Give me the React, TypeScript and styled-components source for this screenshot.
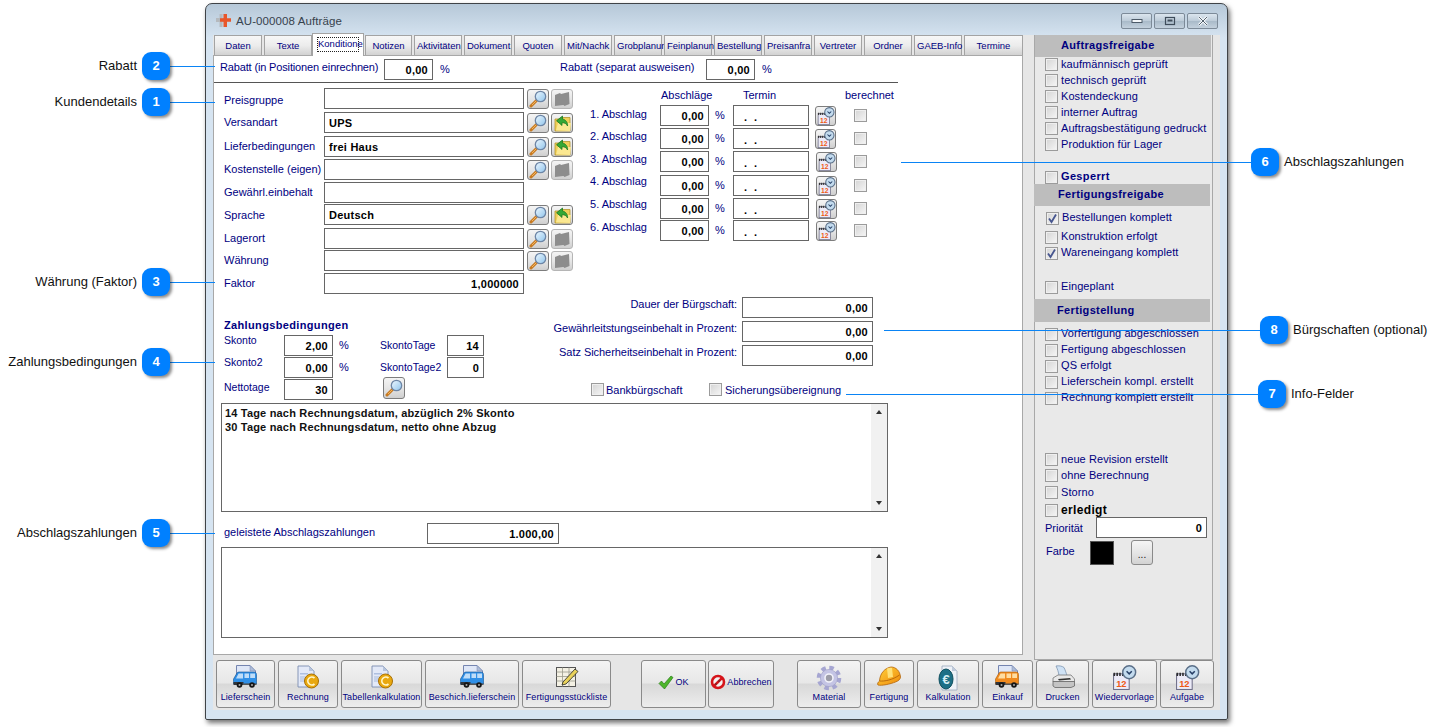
import React from "react";
import styled, { createGlobalStyle } from "styled-components";

const Global = createGlobalStyle`
  html, body { margin: 0; padding: 0; width: 1442px; height: 727px; overflow: hidden; background: #fff; }
  body { font-family: "Liberation Sans", Arial, sans-serif; }
  * { box-sizing: border-box; }
`;

const NAVY = "#00007f";

const Page = styled.div`position: relative; width: 1442px; height: 727px; padding: 3px 0 0 205px;`;
const Win = styled.div`
  width: 1023px; height: 717px; border: 1px solid #3f4347; border-radius: 7px 7px 2px 2px;
  background: linear-gradient(#b6c8d8 0, #d6e4f1 34px); padding: 0 7px;
  box-shadow: 2px 3px 5px rgba(0,0,0,.55);
`;
const TitleBar = styled.div`height: 31px; padding: 3px 2px 0 3px; display: flex; align-items: center;`;
const TitleText = styled.div`font-size: 11.5px; color: #37424d; margin-left: 5px; flex: 1; letter-spacing: .1px;`;
const Controls = styled.div`display: flex; gap: 2px;`;
const WinBtn = styled.div`
  width: 31px; height: 16px; border: 1px solid #7c8a98; border-radius: 2px;
  background: linear-gradient(#dbe5ee, #bccbd8 50%, #a9bac9 52%, #c3d1dd);
  display: flex; align-items: center; justify-content: center;
`;
const Client = styled.div`height: 675px; background: #e6e6e6;`;
const TopRow = styled.div`display: flex; height: 625px;`;
const MainCol = styled.div`width: 810px; display: flex; flex-direction: column;`;
const TabStrip = styled.div`height: 20px; display: flex; gap: 2px; padding-left: 1px; align-items: flex-end; position: relative; z-index: 1;`;
const Tab = styled.div<{ $w: number; $fit?: boolean }>`
  width: ${p => p.$w}px; height: 20px; flex: none; border: 1px solid #a3a3a3; border-bottom: 0;
  background: linear-gradient(#f7f7f7, #ececec 50%, #d2d2d2);
  color: ${NAVY}; font-size: 9.5px; line-height: 19px; white-space: nowrap;
  text-align: ${p => p.$fit ? "left" : "center"}; padding-left: ${p => p.$fit ? 2 : 0}px;
`;
const ActiveTab = styled.div`
  width: 52px; height: 23px; flex: none; margin: 0 -1px -1px -2px; border: 1px solid #a3a3a3; border-bottom: 0;
  background: #fff; padding: 3px 4px 0;
`;
const TabFocus = styled.div`
  height: 15px; border: 1px dotted #222; color: ${NAVY}; font-size: 9.5px; line-height: 12px; white-space: nowrap;
`;
const Panel = styled.div`height: 600px; background: #fff; border: 1px solid #a8a8a8;`;
const RabattRow = styled.div`margin-top: 3px; height: 21px; padding-left: 6px; display: flex;`;
const Label = styled.div<{ $w?: number }>`
  font-size: 11px; color: ${NAVY}; white-space: nowrap; line-height: 14px; flex: none;
  ${p => p.$w ? `width: ${p.$w}px;` : ""}
`;
const RabattLabel = styled(Label)<{ $tight?: boolean }>`line-height: 16px; letter-spacing: ${p => p.$tight ? -0.15 : 0}px;`;
const Pct = styled.div`font-size: 11px; color: ${NAVY}; line-height: 21px; margin-left: 7px;`;
const PctGap = styled(Pct)`width: 120px; flex: none;`;
const Field = styled.div<{ $w: number; $left?: boolean }>`
  width: ${p => p.$w}px; height: 21px; flex: none; background: #fff; border: 1px solid #666;
  font-size: 11px; font-weight: 700; color: #000; letter-spacing: .25px; line-height: 20px;
  text-align: ${p => p.$left ? "left" : "right"}; padding: 0 4px 0 ${p => p.$left ? 4 : 3}px; white-space: nowrap; overflow: hidden;
`;
const Divider = styled.div`margin-top: 2px; width: 684px; height: 1px; background: #555;`;
const Details = styled.div`margin-top: 5px; padding-left: 10px; display: flex;`;
const LeftFields = styled.div`width: 349px; flex: none;`;
const FormRow = styled.div<{ $h: number }>`height: ${p => p.$h}px; display: flex; align-items: flex-start;`;
const FormLabel = styled(Label)<{ $top?: number }>`width: 100px; line-height: 21px; margin-top: ${p => p.$top ?? 0}px;`;
const IconPair = styled.div`display: flex; gap: 2px; margin: 1px 0 0 3px;`;
const IconBtn = styled.div<{ $off?: boolean }>`
  width: 22px; height: 20px; flex: none; border: 1px solid ${p => p.$off ? "#b5b5b5" : "#7d7d7d"}; border-radius: 3px;
  background: linear-gradient(#f4f4f4, #e6e6e6 50%, #cfcfcf);
  display: flex; align-items: center; justify-content: center;
`;
const AbschlagCol = styled.div`margin-left: 17px;`;
const HeaderRow = styled.div`height: 14px; display: flex; padding-left: 71px; margin-bottom: 3px;`;
const AbRow = styled.div<{ $h: number }>`
  height: ${p => p.$h}px; display: grid; grid-template-columns: 70px 49px 24px 76px 6px 22px 17px 13px; align-items: start;
`;
const AbLabel = styled(Label)<{ $lift: number }>`margin-top: ${p => p.$lift}px;`;
const AbPct = styled.div`font-size: 11px; color: ${NAVY}; line-height: 21px; padding-left: 6px;`;
const TerminField = styled(Field)`padding-left: 10px; line-height: 23px; word-spacing: 4px; letter-spacing: 0;`;
const CalBtn = styled(IconBtn)<{ $shift: boolean }>`
  width: 21px; grid-column: 6; margin: 1px 0 0 ${p => p.$shift ? 1 : 0}px;
`;
const Box = styled.div<{ $top?: number; $col?: number }>`
  width: 13px; height: 13px; flex: none; border: 1px solid #9b9b9b; margin-top: ${p => p.$top ?? 0}px;
  background: linear-gradient(135deg, #d4d4d4, #f6f6f6);
  display: flex; align-items: center; justify-content: center; box-shadow: inset 0 0 0 1px #efefef;
  ${p => p.$col ? `grid-column: ${p.$col};` : ""}
`;
const Lower = styled.div`margin-top: 3px; padding-left: 10px; display: flex; height: 103px;`;
const Zahlung = styled.div`width: 281px; flex: none; padding-top: 22px;`;
const ZHead = styled.div`font-size: 11px; font-weight: 700; color: ${NAVY}; line-height: 13px; letter-spacing: .35px; margin-bottom: 3px;`;
const ZGrid = styled.div`
  display: grid; grid-template-columns: 60px 49px 47px 67px 37px; grid-auto-rows: 21px; row-gap: 1px; align-items: start;
`;
const ZLabel = styled(Label)<{ $top: number }>`font-size: 10.5px; margin-top: ${p => p.$top}px;`;
const ZPct = styled.div`font-size: 11px; color: ${NAVY}; line-height: 21px; padding-left: 6px;`;
const ZSearch = styled(IconBtn)`grid-column: 4; margin: -2px 0 0 3px; height: 22px;`;
const Buerg = styled.div`width: 368px; flex: none;`;
const BuergRow = styled.div`display: flex; justify-content: flex-end; align-items: flex-start; gap: 5px; height: 21px; margin-bottom: 3px;`;
const BuergLabel = styled(Label)`letter-spacing: -.05px; line-height: 14px;`;
const InfoRow = styled.div`margin-top: 17px; padding-left: 86px; display: flex;`;
const InfoPair = styled.div<{ $w?: number; $gap: number }>`display: flex; gap: ${p => p.$gap}px; ${p => p.$w ? `width: ${p.$w}px;` : ""}`;
const TextBlock = styled.div<{ $h: number }>`
  margin: 3px 0 0 7px; width: 667px; height: ${p => p.$h}px; border: 1px solid #666; background: #fff; display: flex;
`;
const TextBody = styled.div`
  flex: 1; padding: 2px 3px; font-size: 11px; font-weight: 700; line-height: 14px; color: #111; letter-spacing: .18px;
`;
const Scroll = styled.div`
  width: 16px; background: #f1f1f1; display: flex; flex-direction: column; justify-content: space-between; align-items: center; padding: 6px 0;
`;
const Arrow = styled.div<{ $down?: boolean }>`
  width: 0; height: 0; border-left: 3px solid transparent; border-right: 3px solid transparent;
  ${p => p.$down ? "border-top: 4px solid #333;" : "border-bottom: 4px solid #333;"}
`;
const PaidRow = styled.div`margin-top: 11px; padding-left: 10px; display: flex; align-items: flex-start;`;
const PaidLabel = styled(Label)`line-height: 19px;`;

const Side = styled.div`
  margin-left: 11px; width: 179px; height: 625px; background: #e9e9e9; border-left: 1px solid #a8a8a8; border-right: 1px solid #a8a8a8; border-bottom: 1px solid #a8a8a8;
`;
const SideBar = styled.div<{ $h: number; $pad: number; $shift?: boolean; $mt?: number }>`
  height: ${p => p.$h}px; width: 176px; background: #bdbdbd; color: ${NAVY}; font-size: 11px; font-weight: 700;
  letter-spacing: .35px; line-height: ${p => p.$h - 1}px; padding-left: ${p => p.$pad}px;
  margin-left: ${p => p.$shift ? -1 : 0}px; margin-top: ${p => p.$mt ?? 0}px;
`;
const CheckRow = styled.div<{ $h?: number; $mt?: number; $indent?: number }>`
  height: ${p => p.$h ?? 16}px; margin-top: ${p => p.$mt ?? 0}px; padding-left: ${p => 10 + (p.$indent ?? 0)}px;
  display: flex; gap: 3px; align-items: flex-start;
`;
const CheckText = styled.div<{ $bold?: boolean; $black?: boolean; $up?: boolean }>`
  font-size: ${p => p.$black ? 12 : 11}px; font-weight: ${p => p.$bold ? 700 : 400}; color: ${p => p.$black ? "#000" : NAVY};
  line-height: 14px; white-space: nowrap; letter-spacing: ${p => p.$bold ? .35 : .08}px; margin-top: ${p => p.$up ? -1 : 0}px;
`;
const PrioRow = styled.div`display: flex; padding-left: 10px; align-items: center;`;
const SideLabel = styled(Label)`width: 51px;`;
const FarbeRow = styled.div`display: flex; padding-left: 11px; height: 25px; margin-top: 2px; align-items: center;`;
const FarbeLabel = styled(Label)`width: 28px; margin-bottom: 4px;`;
const Swatch = styled.div`width: 24px; height: 24px; background: #000; border: 1px solid #555; margin-left: 16px;`;
const DotsBtn = styled.div`
  width: 22px; height: 25px; margin-left: 17px; border: 1px solid #8a8a8a; border-radius: 3px;
  background: linear-gradient(#f5f5f5, #e6e6e6 50%, #d2d2d2); font-size: 10px; color: #111; text-align: center; line-height: 27px;
`;

const Toolbar = styled.div`height: 48px; padding-left: 3px; display: flex;`;
const ToolGroup = styled.div<{ $gap: number; $ml?: number }>`display: flex; gap: ${p => p.$gap}px; margin-left: ${p => p.$ml ?? 0}px;`;
const ToolBtn = styled.div<{ $w: number; $row?: boolean }>`
  width: ${p => p.$w}px; height: 48px; flex: none; border: 1px solid #8a8a8a; border-radius: 3px;
  background: linear-gradient(#f3f3f3, #e7e7e7 48%, #d8d8d8 50%, #ededed);
  display: flex; align-items: center;
  ${p => p.$row
    ? "flex-direction: row; justify-content: center; gap: 1px; padding-bottom: 4px;"
    : "flex-direction: column; padding-top: 4px;"}
`;
const ToolLabel = styled.div`
  margin-top: auto; padding-bottom: 4px; font-size: 9px; letter-spacing: .1px; line-height: 12px; color: ${NAVY}; white-space: nowrap;
`;
const RowLabel = styled.div`font-size: 9px; letter-spacing: .1px; color: ${NAVY}; white-space: nowrap;`;

const Badge = styled.div<{ $cx: number; $cy: number }>`
  position: absolute; left: ${p => p.$cx - 14}px; top: ${p => p.$cy - 14}px; width: 28px; height: 28px;
  border-radius: 9px; background: #0080ff; color: #fff; font-size: 13px; font-weight: 700; line-height: 28px; text-align: center;
  box-shadow: 2px 2px 3px rgba(0,0,0,.45); z-index: 5;
`;
const Wire = styled.div<{ $x1: number; $x2: number; $y: number }>`
  position: absolute; left: ${p => p.$x1}px; width: ${p => p.$x2 - p.$x1}px; top: ${p => p.$y}px; height: 1px; background: #0a84f5; z-index: 4;
`;
const NoteL = styled.div<{ $cy: number }>`
  position: absolute; right: ${1442 - 137}px; top: ${p => p.$cy - 8}px; font-size: 13px; line-height: 16px; color: #111; white-space: nowrap;
`;
const NoteR = styled.div<{ $x: number; $cy: number }>`
  position: absolute; left: ${p => p.$x}px; top: ${p => p.$cy - 8}px; font-size: 13px; line-height: 16px; color: #111; white-space: nowrap;
`;

const Lens = () => (
  <svg width="19" height="18" viewBox="0 0 19 18">
    <defs><linearGradient id="lens" x1="0" y1="0" x2="1" y2="1"><stop offset="0" stopColor="#eef8ff"/><stop offset="1" stopColor="#8fc4ec"/></linearGradient></defs>
    <path d="M7.5 10.5 2 16" stroke="#c77a22" strokeWidth="3" strokeLinecap="round"/>
    <path d="M7.5 10.5 3 15" stroke="#f2b45c" strokeWidth="1"/>
    <circle cx="11.5" cy="6.5" r="5.2" fill="url(#lens)" stroke="#6e86a6" strokeWidth="1.3"/>
  </svg>
);
const FolderArrow = () => (
  <svg width="19" height="17" viewBox="0 0 19 17">
    <path d="M2 4h5l1-1.500h9V16H2z" fill="#f0cf58" stroke="#b3962e" strokeWidth=".8"/>
    <path d="M3 15.500 5 8h13l-1 8z" fill="#fbe891"/>
    <path d="M9.500 1 3.500 5.800l5.500 4.700V7.800c2.500-.3 4.500 1 5.500 3.200.6-3.500-2-6.500-5-7z" fill="#35a835" stroke="#12701a" strokeWidth=".7"/>
  </svg>
);
const GreyBlob = () => (
  <svg width="18" height="16" viewBox="0 0 18 16">
    <path d="M2 4 7 2l1 1 8-2 .5 12-5 2-1-1L2 15z" fill="#8d8d8d"/>
  </svg>
);
const CalClock = ({ size = 18 }: { size?: number }) => (
  <svg width={size} height={size} viewBox="0 0 24 24">
    <rect x="1.500" y="8.500" width="15" height="15" fill="#ecebf8" stroke="#6f6f88"/>
    <path d="M1.500 9h15" stroke="#2c2c2c" strokeWidth="3" strokeDasharray="1.500 1.200"/>
    <text x="9" y="21.500" fontSize="9" fontWeight="700" fill="#ef5a16" textAnchor="middle" fontFamily="Liberation Sans">12</text>
    <circle cx="16.500" cy="7" r="6.200" fill="#c3dbee" stroke="#5a6f88" strokeWidth="1.400"/>
    <path d="M14 6 16.500 8.500 19 6" fill="none" stroke="#263f66" strokeWidth="1.400"/>
  </svg>
);
const Van = ({ color = "#2f8fe6", dark = "#14508f", glass = "#cfe6fa" }: { color?: string; dark?: string; glass?: string }) => (
  <svg width="25" height="24" viewBox="0 0 25 24">
    <path d="M3.500.5H17L22.500 6v13H3.500z" fill="#dfe7f7" stroke="#7585b0"/>
    <path d="M17 .5V6h5.500z" fill="#aebdd8" stroke="#7585b0" strokeWidth=".5"/>
    <path d="M.5 16.500v-2.500L4 8c.4-.7 1-1 2-1h15c1.500 0 2.500 1 2.500 2.500V19H.5z" fill={color} stroke={dark} strokeWidth=".6"/>
    <path d="M3 13.500 5.600 8.500H10v5zM11.500 8.500h4.500v4.500h-4.500zM17.200 8.500h4.800v4.500h-4.800z" fill={glass} opacity=".9"/>
    <rect x=".5" y="17" width="10" height="3" fill="#30343a"/>
    <rect x="10" y="18.500" width="13.500" height="1.500" fill="#555"/>
    <circle cx="6.500" cy="20" r="2.800" fill="#161616"/><circle cx="6.500" cy="20" r="1" fill="#aaa"/>
    <circle cx="19" cy="20" r="2.800" fill="#161616"/><circle cx="19" cy="20" r="1" fill="#aaa"/>
  </svg>
);
const DocCoin = () => (
  <svg width="24" height="24" viewBox="0 0 24 24">
    <path d="M2 1h11l5 5v16H2z" fill="#e3e9f8" stroke="#7b8db0" strokeWidth=".9"/>
    <path d="M13 1v5h5z" fill="#b6c4dc"/>
    <rect x="4" y="8" width="8" height="1.500" fill="#aebfe0"/><rect x="4" y="11" width="5" height="6" fill="#c6d2ea"/>
    <circle cx="15.500" cy="16" r="7" fill="#e9a80f" stroke="#a66f05"/>
    <path d="M18.500 13a4 4 0 1 0 0 6" fill="none" stroke="#fff6c9" strokeWidth="1.700"/>
  </svg>
);
const TablePen = () => (
  <svg width="24" height="24" viewBox="0 0 24 24">
    <rect x="1.500" y="2.500" width="19" height="19" fill="#f4f1e4" stroke="#555"/>
    <path d="M1.500 7h19M1.500 11.500h19M1.500 16h19M7.500 2.500v19M14 2.500v19" stroke="#9a9a8c" strokeWidth=".8"/>
    <path d="M8 17 20 4l3 2.500L11 19l-4 1z" fill="#e9d25a" stroke="#222" strokeWidth=".8"/>
  </svg>
);
const Check = () => (
  <svg width="16" height="15" viewBox="0 0 16 15">
    <path d="M1 8.500 3.500 6l2.500 3L13 1l2 1.500L6.500 14z" fill="#4cb52a" stroke="#2a7d18" strokeWidth=".7"/>
  </svg>
);
const Forbid = () => (
  <svg width="16" height="16" viewBox="0 0 16 16">
    <circle cx="8" cy="8" r="6" fill="#f3f3f3" stroke="#d5141a" strokeWidth="2.600"/>
    <path d="M3.800 12.200 12.200 3.800" stroke="#d5141a" strokeWidth="2.600"/>
    <path d="M5 9h2v2H5zM8 6h2v2H8z" fill="#333" opacity=".4"/>
  </svg>
);
const Gear = () => (
  <svg width="26" height="26" viewBox="0 0 26 26">
    <circle cx="13" cy="13" r="10.300" fill="none" stroke="#a6a6d2" strokeWidth="4" strokeDasharray="4.500 3.590"/>
    <circle cx="13" cy="13" r="8.600" fill="#c4c4e4" stroke="#9b9bc4" strokeWidth=".6"/>
    <circle cx="13" cy="13" r="4" fill="#9c9ca8" stroke="#f2f2fa" strokeWidth="1.600"/>
  </svg>
);
const Hat = () => (
  <svg width="26" height="24" viewBox="0 0 26 24">
    <defs><linearGradient id="hat" x1="0" y1="0" x2="1" y2="1"><stop offset="0" stopColor="#ffd23a"/><stop offset="1" stopColor="#ef8a0c"/></linearGradient></defs>
    <path d="M2 20c-1-1 0-3 1.500-4C4 8 9 3 15 2c5 0 9 4 9.500 10 0 2-2 4-5 5-5 2-14 4-17.500 3z" fill="url(#hat)" stroke="#b3640a" strokeWidth=".8"/>
    <path d="M11 3.500c2-.8 4-.8 5-.5l1 9-5 1z" fill="#ffe27a"/>
    <path d="M3.500 16c5 .5 13-1 20-6" fill="none" stroke="#b3640a" strokeWidth=".9"/>
  </svg>
);
const EuroDoc = () => (
  <svg width="24" height="26" viewBox="0 0 24 26">
    <path d="M6 1h10l5 5v19H6z" fill="#eef2f8" stroke="#9aa8bd" strokeWidth=".8"/>
    <path d="M16 1v5h5z" fill="#c0cbdb"/>
    <ellipse cx="10" cy="14" rx="7" ry="10" fill="#1d6f86" stroke="#0f4f5e"/>
    <text x="10" y="18.500" fontSize="13" fontWeight="700" fill="#d6eef4" textAnchor="middle" fontFamily="Liberation Sans">€</text>
  </svg>
);
const Printer = () => (
  <svg width="26" height="24" viewBox="0 0 26 24">
    <path d="M6 1c3-.5 6 0 8 1.500 1 2 2 5 3 8H9C8.500 7 7.500 4 6 1z" fill="#cfe2f5" stroke="#7f95b0" strokeWidth=".8"/>
    <path d="M3 13 8 10h13l3.500 4v3H3z" fill="#e8e8e8" stroke="#777" strokeWidth=".8"/>
    <path d="M3 16.500h21.500V21L21 22.500H5L3 21z" fill="#c4c4c4" stroke="#666" strokeWidth=".8"/>
    <path d="M8 14 20 13l1 1.500-12 1z" fill="#333"/>
  </svg>
);
const AppIcon = () => (
  <svg width="15" height="16" viewBox="0 0 15 16">
    <path d="M3.500 1h3v4H10v4H6.500v5h-3V9H0V5h3.500z" fill="#b5b9bd"/>
    <path d="M7.500 1H11v4.200h4v3.600h-4V14H7.500V8.800H4V5.200h3.500z" fill="#e8562a"/>
  </svg>
);

const forms = [
  { l: "Preisgruppe", v: "", h: 24, a: false, top: 2 },
  { l: "Versandart", v: "UPS", h: 24, a: true },
  { l: "Lieferbedingungen", v: "frei Haus", h: 23, a: true },
  { l: "Kostenstelle (eigen)", v: "", h: 23, a: false },
  { l: "Gewährl.einbehalt", v: "", h: 22, none: true },
  { l: "Sprache", v: "Deutsch", h: 24, a: true, top: 1 },
  { l: "Lagerort", v: "", h: 22, a: false },
  { l: "Währung", v: "", h: 23, a: false },
];
const abRows = [
  { n: 1, h: 23, lift: 2 }, { n: 2, h: 23, lift: 1 }, { n: 3, h: 24, lift: 1 },
  { n: 4, h: 23, lift: -1 }, { n: 5, h: 22, lift: -1 }, { n: 6, h: 21, lift: 0 },
];
const tabs: [string, number, boolean][] = [["Daten", 48, false], ["Texte", 48, false]];
const tabs2: [string, number, boolean][] = [
  ["Notizen", 47, false], ["Aktivitäten", 48, true], ["Dokument", 48, true], ["Quoten", 48, false],
  ["Mit/Nachk", 48, true], ["Grobplanun", 48, true], ["Feinplanun", 48, true], ["Bestellung", 48, true],
  ["Preisanfra", 48, true], ["Vertreter", 48, false], ["Ordner", 48, false], ["GAEB-Info", 48, true], ["Termine", 59, false],
];

const callouts = [
  { n: 2, y: 66, t: "Rabatt" }, { n: 1, y: 102, t: "Kundendetails" }, { n: 3, y: 282, t: "Währung (Faktor)" },
  { n: 4, y: 362, t: "Zahlungsbedingungen" }, { n: 5, y: 533, t: "Abschlagszahlungen" },
];
const calloutsR = [
  { n: 6, cx: 1265, y: 162, from: 901, x: 1284, t: "Abschlagszahlungen" },
  { n: 8, cx: 1274, y: 330, from: 884, x: 1293, t: "Bürgschaften (optional)" },
  { n: 7, cx: 1272, y: 394, from: 846, x: 1291, t: "Info-Felder" },
];

const Tick = () => (
  <svg width="11" height="11" viewBox="0 0 11 11"><path d="M2 5.500 4.500 9 9 1.500" fill="none" stroke="#47568f" strokeWidth="1.800"/></svg>
);
const SideCheck = ({ t, h, mt, indent, bold, black, on, up }: { t: string; h?: number; mt?: number; indent?: number; bold?: boolean; black?: boolean; on?: boolean; up?: boolean }) => (
  <CheckRow $h={h} $mt={mt} $indent={indent}>
    <Box $top={1}>{on ? <Tick /> : null}</Box>
    <CheckText $bold={bold} $black={black} $up={up}>{t}</CheckText>
  </CheckRow>
);

export default function App() {
  return (
    <Page>
      <Global />
      <Win>
        <TitleBar>
          <AppIcon />
          <TitleText>AU-000008 Aufträge</TitleText>
          <Controls>
            <WinBtn><svg width="12" height="6" viewBox="0 0 12 6"><rect x="1" y="1.500" width="10" height="3" fill="#f4f7fa" stroke="#4c5a68"/></svg></WinBtn>
            <WinBtn><svg width="12" height="10" viewBox="0 0 12 10"><rect x="1.500" y="1.500" width="9" height="7" fill="none" stroke="#3e4c5a" strokeWidth="1.200"/><rect x="3.500" y="3.500" width="5" height="2" fill="#3e4c5a"/></svg></WinBtn>
            <WinBtn><svg width="12" height="10" viewBox="0 0 12 10"><path d="M2 1l8 8M10 1 2 9" stroke="#f4f7fa" strokeWidth="2.600"/><path d="M2 1l8 8M10 1 2 9" stroke="#55636f" strokeWidth="1"/></svg></WinBtn>
          </Controls>
        </TitleBar>
        <Client>
          <TopRow>
            <MainCol>
              <TabStrip>
                {tabs.map(([t, w, f]) => <Tab key={t} $w={w} $fit={f}>{t}</Tab>)}
                <ActiveTab><TabFocus>Konditione</TabFocus></ActiveTab>
                {tabs2.map(([t, w, f]) => <Tab key={t} $w={w} $fit={f}>{t}</Tab>)}
              </TabStrip>
              <Panel>
                <RabattRow>
                  <RabattLabel $w={164} $tight>Rabatt (in Positionen einrechnen)</RabattLabel>
                  <Field $w={49}>0,00</Field>
                  <PctGap>%</PctGap>
                  <RabattLabel $w={146}>Rabatt (separat ausweisen)</RabattLabel>
                  <Field $w={49}>0,00</Field>
                  <Pct>%</Pct>
                </RabattRow>
                <Divider />
                <Details>
                  <LeftFields>
                    {forms.map(f => (
                      <FormRow key={f.l} $h={f.h}>
                        <FormLabel $top={f.top}>{f.l}</FormLabel>
                        <Field $w={200} $left>{f.v}</Field>
                        {!f.none && (
                          <IconPair>
                            <IconBtn><Lens /></IconBtn>
                            <IconBtn $off={!f.a}>{f.a ? <FolderArrow /> : <GreyBlob />}</IconBtn>
                          </IconPair>
                        )}
                      </FormRow>
                    ))}
                    <FormRow $h={21}>
                      <FormLabel>Faktor</FormLabel>
                      <Field $w={200}>1,000000</Field>
                    </FormRow>
                  </LeftFields>
                  <AbschlagCol>
                    <HeaderRow>
                      <Label $w={82}>Abschläge</Label>
                      <Label $w={102}>Termin</Label>
                      <Label>berechnet</Label>
                    </HeaderRow>
                    {abRows.map(r => (
                      <AbRow key={r.n} $h={r.h}>
                        <AbLabel $lift={r.lift}>{r.n}. Abschlag</AbLabel>
                        <Field $w={49}>0,00</Field>
                        <AbPct>%</AbPct>
                        <TerminField $w={76} $left>. .</TerminField>
                        <CalBtn $shift={r.n > 2}><CalClock /></CalBtn>
                        <Box $top={4} $col={8} />
                      </AbRow>
                    ))}
                  </AbschlagCol>
                </Details>
                <Lower>
                  <Zahlung>
                    <ZHead>Zahlungsbedingungen</ZHead>
                    <ZGrid>
                      <ZLabel $top={-2}>Skonto</ZLabel>
                      <Field $w={49}>2,00</Field>
                      <ZPct>%</ZPct>
                      <ZLabel $top={3}>SkontoTage</ZLabel>
                      <Field $w={37}>14</Field>
                      <ZLabel $top={-2}>Skonto2</ZLabel>
                      <Field $w={49}>0,00</Field>
                      <ZPct>%</ZPct>
                      <ZLabel $top={3}>SkontoTage2</ZLabel>
                      <Field $w={37}>0</Field>
                      <ZLabel $top={1}>Nettotage</ZLabel>
                      <Field $w={49}>30</Field>
                      <ZSearch><Lens /></ZSearch>
                    </ZGrid>
                  </Zahlung>
                  <Buerg>
                    <BuergRow><BuergLabel>Dauer der Bürgschaft:</BuergLabel><Field $w={131}>0,00</Field></BuergRow>
                    <BuergRow><BuergLabel>Gewährleitstungseinbehalt in Prozent:</BuergLabel><Field $w={131}>0,00</Field></BuergRow>
                    <BuergRow><BuergLabel>Satz Sicherheitseinbehalt in Prozent:</BuergLabel><Field $w={131}>0,00</Field></BuergRow>
                    <InfoRow>
                      <InfoPair $w={118} $gap={2}><Box /><Label>Bankbürgschaft</Label></InfoPair>
                      <InfoPair $gap={3}><Box /><Label>Sicherungsübereignung</Label></InfoPair>
                    </InfoRow>
                  </Buerg>
                </Lower>
                <TextBlock $h={109}>
                  <TextBody>14 Tage nach Rechnungsdatum, abzüglich 2% Skonto<br />30 Tage nach Rechnungsdatum, netto ohne Abzug</TextBody>
                  <Scroll><Arrow /><Arrow $down /></Scroll>
                </TextBlock>
                <PaidRow>
                  <PaidLabel $w={203}>geleistete Abschlagszahlungen</PaidLabel>
                  <Field $w={132}>1.000,00</Field>
                </PaidRow>
                <TextBlock $h={91}>
                  <TextBody />
                  <Scroll><Arrow /><Arrow $down /></Scroll>
                </TextBlock>
              </Panel>
            </MainCol>
            <Side>
              <SideBar $h={22} $pad={26}>Auftragsfreigabe</SideBar>
              <SideCheck t="kaufmännisch geprüft" />
              <SideCheck t="technisch geprüft" />
              <SideCheck t="Kostendeckung" />
              <SideCheck t="interner Auftrag" />
              <SideCheck t="Auftragsbestätigung gedruckt" />
              <SideCheck t="Produktion für Lager" />
              <SideCheck t="Gesperrt" bold mt={17} h={14} up />
              <SideBar $h={22} $pad={24} $shift>Fertigungsfreigabe</SideBar>
              <SideCheck t="Bestellungen komplett" mt={5} indent={1} on up />
              <SideCheck t="Konstruktion erfolgt" mt={3} up />
              <SideCheck t="Wareneingang komplett" on up />
              <SideCheck t="Eingeplant" mt={18} up />
              <SideBar $h={23} $pad={23} $shift $mt={3}>Fertigstellung</SideBar>
              <SideCheck t="Vorfertigung abgeschlossen" mt={5} up />
              <SideCheck t="Fertigung abgeschlossen" up />
              <SideCheck t="QS erfolgt" up />
              <SideCheck t="Lieferschein kompl. erstellt" up />
              <SideCheck t="Rechnung komplett erstellt" up />
              <SideCheck t="neue Revision erstellt" mt={45} />
              <SideCheck t="ohne Berechnung" h={17} />
              <SideCheck t="Storno" h={18} />
              <SideCheck t="erledigt" bold black h={14} />
              <PrioRow>
                <SideLabel>Priorität</SideLabel>
                <Field $w={111}>0</Field>
              </PrioRow>
              <FarbeRow>
                <FarbeLabel>Farbe</FarbeLabel>
                <Swatch />
                <DotsBtn>...</DotsBtn>
              </FarbeRow>
            </Side>
          </TopRow>
          <Toolbar>
            <ToolGroup $gap={3}>
              <ToolBtn $w={59}><Van /><ToolLabel>Lieferschein</ToolLabel></ToolBtn>
              <ToolBtn $w={60}><DocCoin /><ToolLabel>Rechnung</ToolLabel></ToolBtn>
              <ToolBtn $w={81}><DocCoin /><ToolLabel>Tabellenkalkulation</ToolLabel></ToolBtn>
              <ToolBtn $w={94}><Van /><ToolLabel>Beschich.lieferschein</ToolLabel></ToolBtn>
              <ToolBtn $w={89}><TablePen /><ToolLabel>Fertigungsstückliste</ToolLabel></ToolBtn>
            </ToolGroup>
            <ToolGroup $gap={2} $ml={30}>
              <ToolBtn $w={65} $row><Check /><RowLabel>OK</RowLabel></ToolBtn>
              <ToolBtn $w={66} $row><Forbid /><RowLabel>Abbrechen</RowLabel></ToolBtn>
            </ToolGroup>
            <ToolGroup $gap={3} $ml={23}>
              <ToolBtn $w={64}><Gear /><ToolLabel>Material</ToolLabel></ToolBtn>
              <ToolBtn $w={50}><Hat /><ToolLabel>Fertigung</ToolLabel></ToolBtn>
              <ToolBtn $w={62}><EuroDoc /><ToolLabel>Kalkulation</ToolLabel></ToolBtn>
              <ToolBtn $w={51}><Van color="#f08a1e" dark="#a85a08" glass="#ffe6b0" /><ToolLabel>Einkauf</ToolLabel></ToolBtn>
              <ToolBtn $w={53}><Printer /><ToolLabel>Drucken</ToolLabel></ToolBtn>
              <ToolBtn $w={65}><CalClock size={25} /><ToolLabel>Wiedervorlage</ToolLabel></ToolBtn>
              <ToolBtn $w={54}><CalClock size={25} /><ToolLabel>Aufgabe</ToolLabel></ToolBtn>
            </ToolGroup>
          </Toolbar>
        </Client>
      </Win>
      {callouts.map(c => (
        <React.Fragment key={c.n}>
          <NoteL $cy={c.y}>{c.t}</NoteL>
          <Wire $x1={170} $x2={215} $y={c.y} />
          <Badge $cx={156} $cy={c.y}>{c.n}</Badge>
        </React.Fragment>
      ))}
      {calloutsR.map(c => (
        <React.Fragment key={c.n}>
          <Wire $x1={c.from} $x2={c.cx - 14} $y={c.y} />
          <Badge $cx={c.cx} $cy={c.y}>{c.n}</Badge>
          <NoteR $x={c.x} $cy={c.y}>{c.t}</NoteR>
        </React.Fragment>
      ))}
    </Page>
  );
}
